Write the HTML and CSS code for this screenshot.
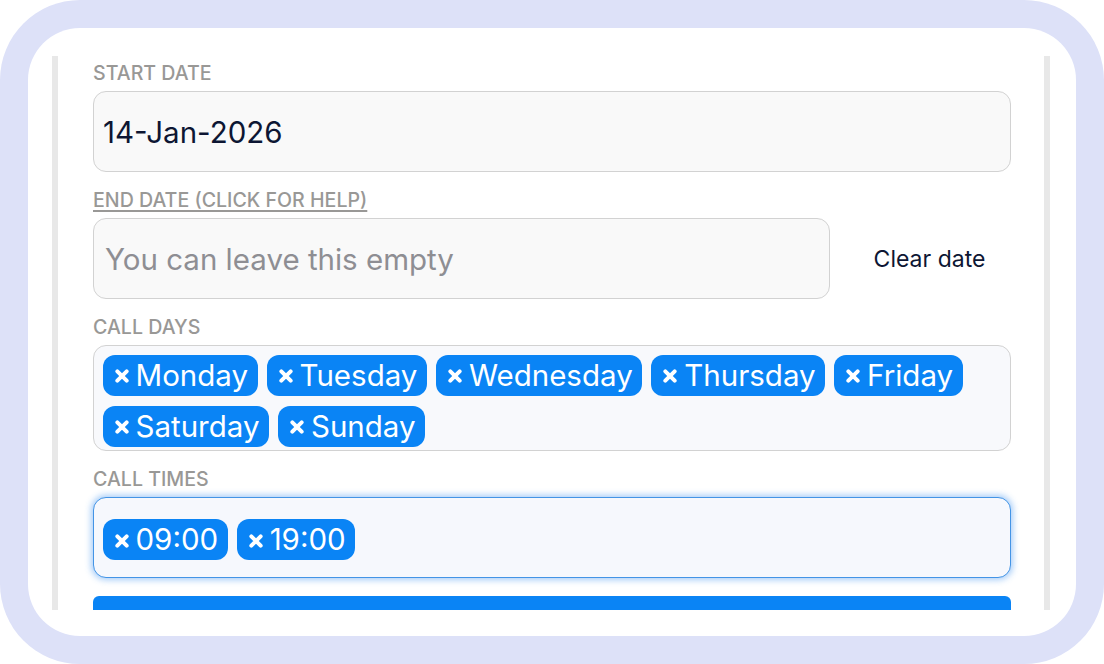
FILE: index.html
```html
<!DOCTYPE html>
<html>
<head>
<meta charset="utf-8">
<link rel="stylesheet" href="styles.css">
</head>
<body>
<div class="frame">
  <div class="card">
    <div class="panel">
      <div class="field">
        <div class="label">Start date</div>
        <div class="input"><span class="value">14-Jan-2026</span></div>
      </div>
      <div class="field">
        <div class="label link">End date (click for help)</div>
        <div class="row">
          <div class="input grow"><span class="placeholder">You can leave this empty</span></div>
          <div class="clear">Clear date</div>
        </div>
      </div>
      <div class="field">
        <div class="label">Call days</div>
        <div class="tags">
          <span class="chip"><svg class="x" viewBox="0 0 12 12"><path d="M2 2L10 10M10 2L2 10"/></svg>Monday</span>
          <span class="chip"><svg class="x" viewBox="0 0 12 12"><path d="M2 2L10 10M10 2L2 10"/></svg>Tuesday</span>
          <span class="chip"><svg class="x" viewBox="0 0 12 12"><path d="M2 2L10 10M10 2L2 10"/></svg>Wednesday</span>
          <span class="chip"><svg class="x" viewBox="0 0 12 12"><path d="M2 2L10 10M10 2L2 10"/></svg>Thursday</span>
          <span class="chip"><svg class="x" viewBox="0 0 12 12"><path d="M2 2L10 10M10 2L2 10"/></svg>Friday</span>
          <span class="chip"><svg class="x" viewBox="0 0 12 12"><path d="M2 2L10 10M10 2L2 10"/></svg>Saturday</span>
          <span class="chip"><svg class="x" viewBox="0 0 12 12"><path d="M2 2L10 10M10 2L2 10"/></svg>Sunday</span>
        </div>
      </div>
      <div class="field">
        <div class="label">Call times</div>
        <div class="tags focus">
          <span class="chip"><svg class="x" viewBox="0 0 12 12"><path d="M2 2L10 10M10 2L2 10"/></svg>09:00</span>
          <span class="chip"><svg class="x" viewBox="0 0 12 12"><path d="M2 2L10 10M10 2L2 10"/></svg>19:00</span>
        </div>
      </div>
      <div class="submit"></div>
    </div>
  </div>
</div>
</body>
</html>
```
FILE: styles.css
```css
html, body {
  margin: 0;
  padding: 0;
  background: #ffffff;
}
body {
  width: 1104px;
  height: 664px;
  overflow: hidden;
  font-family: Inter, "Noto Sans", sans-serif;
}
.frame {
  width: 1104px;
  height: 664px;
  box-sizing: border-box;
  background: #dde1f8;
  border-radius: 80px;
  padding: 28px;
}
.card {
  height: 100%;
  background: #ffffff;
  border-radius: 52px;
  box-sizing: border-box;
  padding: 28px 26px 26px 24px;
}
.panel {
  height: 100%;
  box-sizing: border-box;
  border-left: 6px solid #e8e8e8;
  border-right: 6px solid #e8e8e8;
  padding: 7px 33px 0 35px;
  overflow: hidden;
}
.field {
  margin-bottom: 18px;
}
.label {
  font-size: 19.6px;
  font-weight: 500;
  line-height: 20px;
  color: #999896;
  text-transform: uppercase;
  margin-bottom: 8px;
}
.label.link {
  text-decoration: underline;
  text-decoration-thickness: 1.5px;
  text-underline-offset: 3px;
}
.input {
  height: 81px;
  box-sizing: border-box;
  border: 1.5px solid #d2d2d2;
  border-radius: 13px;
  background: #f9f9f9;
  display: flex;
  align-items: center;
  padding-left: 9px;
  font-size: 29.5px;
}
.value {
  color: #0d1633;
}
.placeholder {
  color: #8e8e93;
  margin-left: 2px;
}
.row {
  display: flex;
  align-items: center;
}
.grow {
  flex: 1;
}
.clear {
  width: 181px;
  box-sizing: border-box;
  padding-left: 18px;
  text-align: center;
  font-size: 23px;
  color: #0d1633;
}
.tags {
  box-sizing: border-box;
  border: 1.5px solid #d2d2d2;
  border-radius: 13px;
  background: #f8f9fc;
  display: flex;
  flex-wrap: wrap;
  gap: 10px 9px;
  padding: 8.5px 8.5px 3.5px 8.5px;
  min-height: 81px;
  align-content: flex-start;
}
.tags.focus {
  border: 1.5px solid #4394e6;
  background: #f6f8fd;
  box-shadow: 0 0 6px 2px rgba(60, 145, 240, 0.45);
  padding-top: 21px;
}
.chip {
  display: inline-flex;
  align-items: center;
  height: 41px;
  box-sizing: border-box;
  padding: 0 9.5px 0 12px;
  background: #0a84f5;
  color: #ffffff;
  border-radius: 12px;
  font-size: 29.5px;
  line-height: 41px;
}
.x {
  width: 14px;
  height: 14px;
  margin-right: 7px;
  margin-top: 2px;
  flex: none;
}
.x path {
  stroke: #ffffff;
  stroke-width: 3.4;
  stroke-linecap: round;
  fill: none;
}
.submit {
  height: 30px;
  background: #0a84f5;
  border-radius: 6px 6px 0 0;
}
```
